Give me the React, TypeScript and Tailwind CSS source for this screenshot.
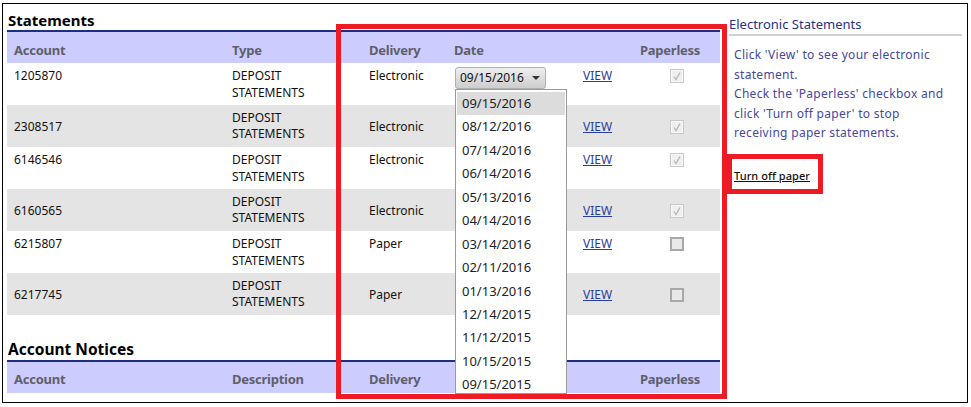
const rows = [
  { a: "1205870", d: "Electronic", checked: true },
  { a: "2308517", d: "Electronic", checked: true },
  { a: "6146546", d: "Electronic", checked: true },
  { a: "6160565", d: "Electronic", checked: true },
  { a: "6215807", d: "Paper", checked: false },
  { a: "6217745", d: "Paper", checked: false },
];
const dates = ["09/15/2016","08/12/2016","07/14/2016","06/14/2016","05/13/2016","04/14/2016","03/14/2016","02/11/2016","01/13/2016","12/14/2015","11/12/2015","10/15/2015","09/15/2015"];

function Check({ checked }: { checked: boolean }) {
  return checked ? (
    <span className="flex h-[14px] w-[14px] items-center justify-center border border-[#c8c8c8] bg-[#efefef] shadow-[inset_0_0_0_1px_#f8f8f8]">
      <svg width="10" height="10" viewBox="0 0 10 10" fill="none"><path d="M2 5.5 L4 8.5 L8 1.5" stroke="#b5b5b5" strokeWidth="1.2" /></svg>
    </span>
  ) : (
    <span className="block h-[14px] w-[14px] border-2 border-[#a8a8a8] bg-[#e9e9e9]" />
  );
}

function Head({ second, date, pad }: { second: string; date?: string; pad: string }) {
  return (
    <div className={`flex h-[31px] items-center bg-[#ccccff] ${pad} text-[13px] font-bold tracking-[-0.25px] text-[#5f5f6b]`}>
      <span className="w-[225px] pl-[7px]">Account</span>
      <span className="w-[137px]">{second}</span>
      <span className="w-[85px]">Delivery</span>
      <span className="w-[186px]">{date}</span>
      <span>Paperless</span>
    </div>
  );
}

export default function App() {
  return (
    <div className="relative h-[407px] w-[971px] overflow-hidden bg-white pt-[3px] pl-[2px] font-['Noto_Sans','Open_Sans',sans-serif] text-[12px] text-[#111]">
      <div className="flex h-[400px] w-[966px] border border-black">
        <div className="w-[717px] shrink-0 pl-[4px] pt-[7px]">
          <div className="h-[19px] pl-[1px] text-[15px] leading-[19px] font-bold text-black">Statements</div>
          <div className="h-[2px] bg-[#1d2f80]" />
          <Head second="Type" date="Date" pad="pt-[6px]" />
          {rows.map((r, i) => {
            const gray = i % 2 === 1;
            return (
              <div key={r.a} className={`flex h-[42px] ${gray ? "items-center bg-[#e4e4e4] pt-[2px]" : "items-start pt-[4px] bg-white"}`}>
                <span className="w-[225px] pl-[7px]">{r.a}</span>
                <span className={`w-[137px] leading-[16.5px] ${gray ? "-mt-[2px]" : "mt-[1px]"}`}>DEPOSIT<br />STATEMENTS</span>
                <span className="w-[85px]">{r.d}</span>
                <span className="w-[129px]" />
                <span className="w-[67px] text-[#2a3c9c] underline">VIEW</span>
                <span className={`ml-[20px] ${gray ? "" : "mt-[2px]"}`}><Check checked={r.checked} /></span>
              </div>
            );
          })}
          <div className="mt-[24px] h-[21px] pl-[1px] text-[15.5px] leading-[21px] font-bold text-black">Account Notices</div>
          <div className="h-[2px] bg-[#1d2f80]" />
          <Head second="Description" pad="pt-[5px]" />
        </div>
        <div className="ml-[9px] w-[233px] pt-[11px]">
          <div className="border-b-2 border-[#d2d2d2] pb-[1px] text-[13px] leading-[18px] text-[#27308a]">Electronic Statements</div>
          <p className="mt-[9px] ml-[5px] max-w-[215px] text-[12px] leading-[19.5px] tracking-[0.3px] text-[#4448a0]">
            Click 'View' to see your electronic statement.<br />
            Check the 'Paperless' checkbox and click 'Turn off paper' to stop receiving paper statements.
          </p>
          <a className="mt-[25px] ml-[5px] block text-[11px] font-medium tracking-[0.05px] text-[#111] underline">Turn off paper</a>
        </div>
      </div>

      {/* open select */}
      <div className="absolute left-[455px] top-[67px] flex h-[22px] w-[91px] items-center justify-between rounded-[3px] border border-[#b0b0b0] bg-gradient-to-b from-[#efefef] to-[#cdcdcd] pl-[4px] pr-[5px] text-[12px]">
        <span>09/15/2016</span>
        <span className="h-0 w-0 border-x-[4px] border-t-[4px] border-x-transparent border-t-[#333]" />
      </div>
      <div className="absolute left-[455px] top-[89px] h-[305px] w-[112px] overflow-hidden border border-[#9a9a9a] bg-white px-[1px] pt-[2px] text-[13px] text-[#222]">
        {dates.map((d, i) => (
          <div key={i} className={`h-[23.45px] pl-[5px] leading-[23px] ${i === 0 ? "bg-[#dcdcdc]" : ""}`}>{d}</div>
        ))}
      </div>

      {/* annotations */}
      <div className="pointer-events-none absolute left-[336px] top-[24px] h-[375px] w-[391px] border-[5px] border-[#ed1c24]" />
      <div className="pointer-events-none absolute left-[727px] top-[154px] h-[40px] w-[96px] border-[5px] border-[#ed1c24]" />
    </div>
  );
}
